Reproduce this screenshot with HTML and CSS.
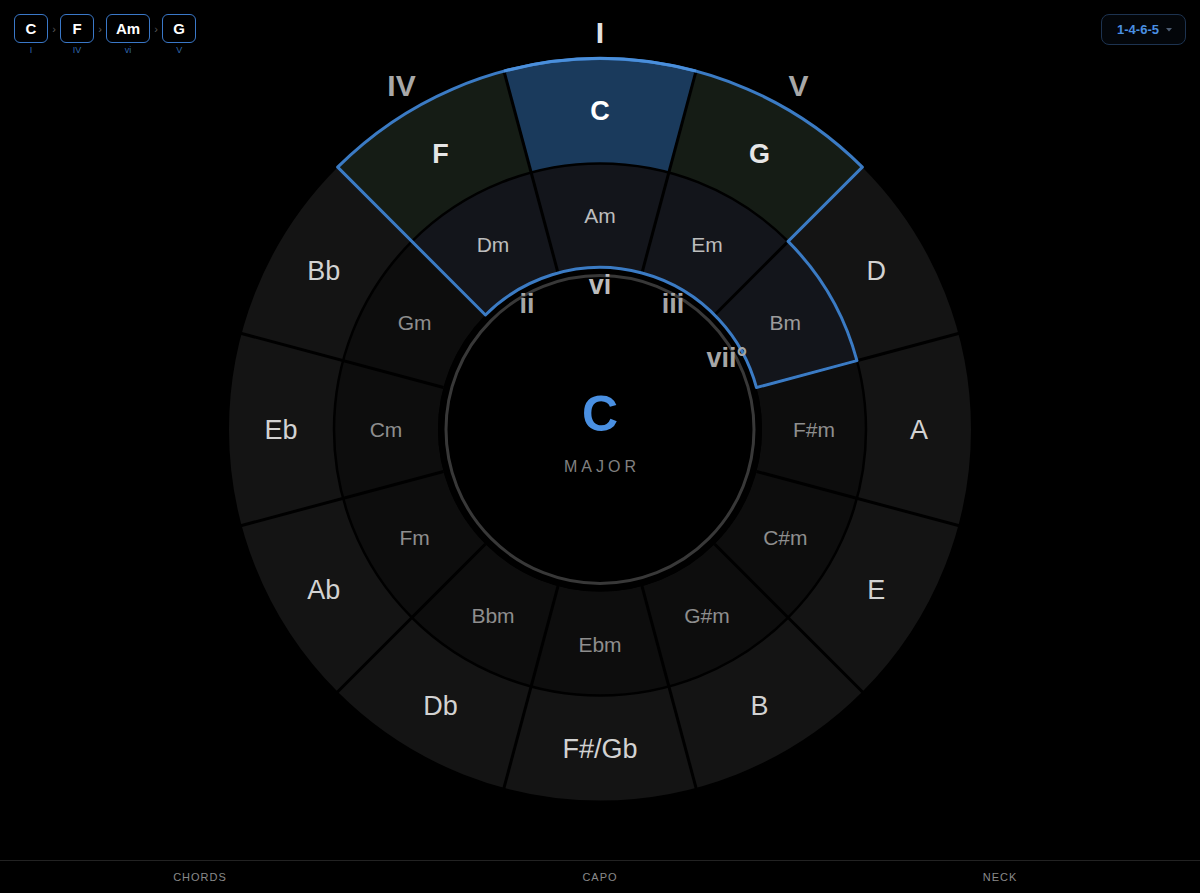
FILE: index.html
```html
<!DOCTYPE html>
<html lang="en">
<head>
<meta charset="utf-8">
<title>Circle of Fifths</title>
<link rel="stylesheet" href="styles.css">
</head>
<body>
<div class="app">
  <main class="stage">
    <svg class="wheel" viewBox="0 0 1200 860" width="1200" height="860" xmlns="http://www.w3.org/2000/svg">
      <g transform="translate(600 429.5)">
        <circle class="ring-major" r="318.5"/>
        <circle class="ring-minor" r="214"/>
        <circle class="hub" r="162"/>

        <path class="hl-tonic" d="M-96.02 -358.36 A371 371 0 0 1 96.02 -358.36 L68.85 -256.94 A266 266 0 0 0 -68.85 -256.94 Z"/>
        <path class="hl-major" d="M-262.34 -262.34 A371 371 0 0 1 -96.02 -358.36 L-68.85 -256.94 A266 266 0 0 0 -188.09 -188.09 Z"/>
        <path class="hl-major" d="M96.02 -358.36 A371 371 0 0 1 262.34 -262.34 L188.09 -188.09 A266 266 0 0 0 68.85 -256.94 Z"/>
        <path class="hl-minor" d="M-188.09 -188.09 A266 266 0 0 1 256.94 -68.85 L156.48 -41.93 A162 162 0 0 0 -114.55 -114.55 Z"/>

        <circle class="ring-line" r="266"/>
        <g class="seps">
          <line x1="0" y1="-162" x2="0" y2="-372" transform="rotate(15)"/>
          <line x1="0" y1="-162" x2="0" y2="-372" transform="rotate(45)"/>
          <line x1="0" y1="-162" x2="0" y2="-372" transform="rotate(75)"/>
          <line x1="0" y1="-162" x2="0" y2="-372" transform="rotate(105)"/>
          <line x1="0" y1="-162" x2="0" y2="-372" transform="rotate(135)"/>
          <line x1="0" y1="-162" x2="0" y2="-372" transform="rotate(165)"/>
          <line x1="0" y1="-162" x2="0" y2="-372" transform="rotate(195)"/>
          <line x1="0" y1="-162" x2="0" y2="-372" transform="rotate(225)"/>
          <line x1="0" y1="-162" x2="0" y2="-372" transform="rotate(255)"/>
          <line x1="0" y1="-162" x2="0" y2="-372" transform="rotate(285)"/>
          <line x1="0" y1="-162" x2="0" y2="-372" transform="rotate(315)"/>
          <line x1="0" y1="-162" x2="0" y2="-372" transform="rotate(345)"/>
        </g>

        <path class="outline" d="M-262.34 -262.34 A371 371 0 0 1 262.34 -262.34 L188.09 -188.09 A266 266 0 0 1 256.94 -68.85 L156.48 -41.93 A162 162 0 0 0 -114.55 -114.55 Z"/>
        <path class="outline-tonic" d="M-96.02 -358.36 A371 371 0 0 1 96.02 -358.36"/>

        <circle class="hub-ring" r="154"/>

        <g class="lbl-major">
          <text class="on tonic" x="0" y="-318.5">C</text>
          <text class="on" x="159.5" y="-276">G</text>
          <text x="276.26" y="-159">D</text>
          <text x="319" y="0.5">A</text>
          <text x="276.26" y="160">E</text>
          <text x="159.5" y="276.5">B</text>
          <text x="0" y="319.5">F#/Gb</text>
          <text x="-159.5" y="276.5">Db</text>
          <text x="-276.26" y="160">Ab</text>
          <text x="-319" y="0.5">Eb</text>
          <text x="-276.26" y="-159">Bb</text>
          <text class="on" x="-159.5" y="-276">F</text>
        </g>

        <g class="lbl-minor">
          <text class="on" x="0" y="-214">Am</text>
          <text class="on" x="107" y="-185.33">Em</text>
          <text class="dim-on" x="185.33" y="-107">Bm</text>
          <text x="214" y="0">F#m</text>
          <text x="185.33" y="107.5">C#m</text>
          <text x="107" y="185.5">G#m</text>
          <text x="0" y="214.5">Ebm</text>
          <text x="-107" y="185.5">Bbm</text>
          <text x="-185.33" y="107.5">Fm</text>
          <text x="-214" y="0">Cm</text>
          <text x="-185.33" y="-107">Gm</text>
          <text class="on" x="-107" y="-185.33">Dm</text>
        </g>

        <g class="lbl-roman">
          <text class="tonic" x="0" y="-397">I</text>
          <text x="198.5" y="-343.8">V</text>
          <text x="-198.5" y="-343.8">IV</text>
        </g>

        <g class="lbl-roman-minor">
          <text class="vi" x="0" y="-145">vi</text>
          <text x="73" y="-125.5">iii</text>
          <text x="-73" y="-125.5">ii</text>
          <text x="127" y="-72">vii°</text>
        </g>

        <text class="key-name" x="0" y="-16">C</text>
        <text class="key-mode" x="2" y="36.5">MAJOR</text>
      </g>
    </svg>

    <header class="topbar">
      <nav class="progression">
        <div class="chip"><span class="chip-box">C</span><span class="chip-num">I</span></div>
        <span class="chip-sep">›</span>
        <div class="chip"><span class="chip-box">F</span><span class="chip-num">IV</span></div>
        <span class="chip-sep">›</span>
        <div class="chip"><span class="chip-box">Am</span><span class="chip-num">vi</span></div>
        <span class="chip-sep">›</span>
        <div class="chip"><span class="chip-box">G</span><span class="chip-num">V</span></div>
      </nav>
      <button class="pattern" type="button">
        <span>1-4-6-5</span>
        <svg class="caret" viewBox="0 0 6 4" width="6" height="4"><path d="M0 0 H6 L3 3.5 Z"/></svg>
      </button>
    </header>
  </main>

  <footer class="tabs">
    <span class="tab">CHORDS</span>
    <span class="tab">CAPO</span>
    <span class="tab">NECK</span>
  </footer>
</div>
</body>
</html>
```

FILE: styles.css
```css
* { box-sizing: border-box; }

html, body {
  margin: 0;
  background: #000;
}

body {
  width: 1200px;
  height: 893px;
  overflow: hidden;
  font-family: "Liberation Sans", Arial, Helvetica, sans-serif;
  color: #ddd;
}

.app {
  display: flex;
  flex-direction: column;
  height: 893px;
}

.stage {
  height: 860px;
  display: grid;
}

.stage > * {
  grid-area: 1 / 1;
}

.wheel {
  display: block;
  width: 1200px;
  height: 860px;
}

/* rings */
.ring-major { fill: none; stroke: #141414; stroke-width: 105; }
.ring-minor { fill: none; stroke: #0d0d0d; stroke-width: 104; }
.hub { fill: #000; }
.hub-ring { fill: none; stroke: #383838; stroke-width: 3; }
.ring-line { fill: none; stroke: #000; stroke-width: 2.5; }
.seps line { stroke: #000; stroke-width: 3; }

.hl-tonic { fill: #1a3a5c; }
.hl-major { fill: #151c15; }
.hl-minor { fill: #13151b; }

.outline {
  fill: none;
  stroke: #3b7bc4;
  stroke-width: 3;
  stroke-linejoin: round;
}
.outline-tonic {
  fill: none;
  stroke: #4a8fdc;
  stroke-width: 3;
}

/* labels */
.wheel text {
  text-anchor: middle;
  dominant-baseline: central;
  font-family: "Liberation Sans", Arial, Helvetica, sans-serif;
}

.lbl-major text { font-size: 27px; fill: #d2d2d2; }
.lbl-major text.on { font-weight: bold; fill: #e6e6e6; }
.lbl-major text.tonic { fill: #ffffff; }

.lbl-minor text { font-size: 21px; fill: #8e8e8e; }
.lbl-minor text.on { fill: #bdbdbd; }
.lbl-minor text.dim-on { fill: #9c9c9c; }

.lbl-roman text { font-size: 30px; font-weight: bold; fill: #a8a8a8; }
.lbl-roman text.tonic { fill: #e2e2e2; }

.lbl-roman-minor text { font-size: 27px; font-weight: bold; fill: #a6a6a6; }
.lbl-roman-minor text.vi { fill: #bcbcbc; }

.wheel .key-name { font-size: 50px; font-weight: bold; fill: #4a90e2; }
.wheel .key-mode { font-size: 16px; letter-spacing: 4px; fill: #808080; }

/* top bar */
.topbar {
  align-self: start;
  display: flex;
  justify-content: space-between;
  align-items: flex-start;
  padding: 14px 14px 0 14px;
}

.progression {
  display: flex;
  align-items: flex-start;
}

.chip {
  display: flex;
  flex-direction: column;
  align-items: center;
}

.chip-box {
  height: 29px;
  min-width: 34px;
  padding: 0 9px;
  border: 1.5px solid #3a78c8;
  border-radius: 6px;
  background: #000;
  display: flex;
  align-items: center;
  justify-content: center;
  color: #fff;
  font-weight: bold;
  font-size: 15px;
}

.chip-num {
  margin-top: 2px;
  font-size: 9px;
  line-height: 10px;
  color: #3068ad;
}

.chip-sep {
  width: 12px;
  height: 29px;
  display: flex;
  align-items: center;
  justify-content: center;
  color: #5a5a5a;
  font-size: 11px;
}

.pattern {
  width: 85px;
  height: 31px;
  border: 1px solid #1d3350;
  border-radius: 8px;
  background: #03060a;
  display: flex;
  align-items: center;
  justify-content: center;
  gap: 7px;
  padding: 0 0 0 2px;
  color: #4a90e2;
  font-family: "Liberation Sans", Arial, Helvetica, sans-serif;
  font-weight: bold;
  font-size: 13px;
}

.caret { fill: #4d5d73; }

/* bottom tabs */
.tabs {
  height: 33px;
  border-top: 1px solid #222;
  display: grid;
  grid-template-columns: repeat(3, 1fr);
  align-items: center;
  justify-items: center;
}

.tab {
  font-size: 11px;
  letter-spacing: 1px;
  color: #8a8a8a;
}
```
